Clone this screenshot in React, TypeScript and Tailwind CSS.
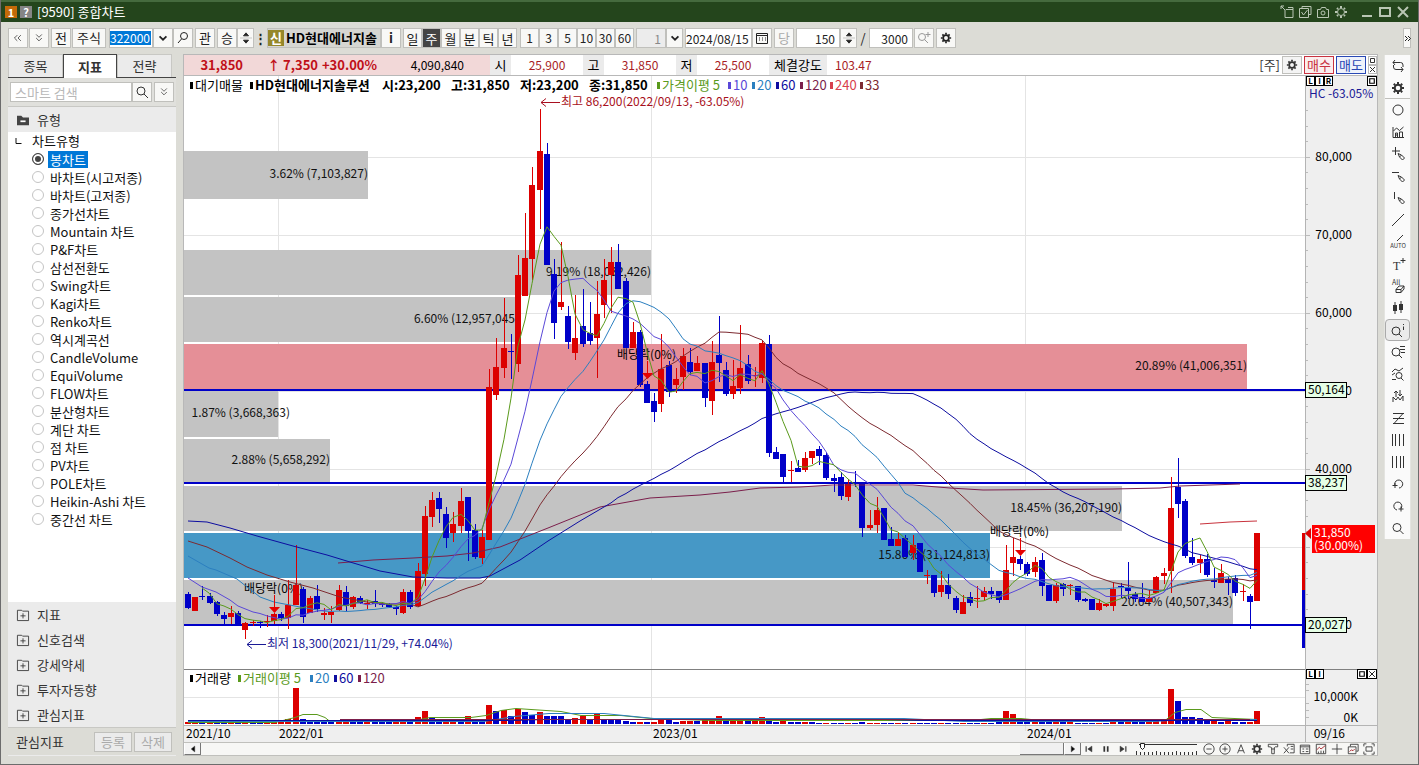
import { Fragment, useState, type ReactNode } from "react";

// up/down, high, body top, body bottom, low (chart units)
type Candle = ["R" | "B", number, number, number, number];

const CANDLES: Candle[] = [
  ["B", 592, 594, 608, 609], ["R", 597, 597, 611, 611], ["B", 586, 596, 597, 600], ["B", 593, 596, 603, 604],
  ["B", 601, 602, 614, 616], ["B", 612, 615, 619, 624], ["R", 606, 613, 617, 624], ["B", 611, 613, 624, 624],
  ["R", 622, 623, 630, 639], ["R", 620, 622, 623, 626], ["B", 621, 622, 623, 628], ["R", 615, 621, 622, 627],
  ["R", 613, 614, 621, 624], ["B", 612, 614, 618, 621], ["R", 580, 605, 618, 629], ["R", 545, 585, 605, 605],
  ["B", 587, 589, 617, 623], ["R", 596, 598, 613, 613], ["B", 585, 596, 609, 612], ["R", 608, 613, 615, 620],
  ["R", 606, 612, 615, 623], ["R", 585, 590, 610, 611], ["B", 586, 592, 606, 611], ["R", 596, 597, 607, 609],
  ["B", 596, 598, 603, 604], ["R", 600, 603, 604, 609], ["B", 590, 601, 604, 607], ["B", 602, 604, 605, 607],
  ["B", 603, 604, 607, 608], ["B", 606, 607, 609, 615], ["R", 589, 592, 613, 614], ["B", 590, 592, 607, 609],
  ["R", 563, 571, 606, 607], ["R", 506, 516, 574, 586], ["R", 492, 500, 517, 527], ["B", 492, 498, 509, 523],
  ["B", 507, 514, 538, 548], ["R", 512, 524, 533, 542], ["R", 488, 501, 526, 533], ["B", 497, 497, 531, 561],
  ["B", 524, 530, 557, 559], ["R", 530, 537, 558, 564], ["R", 369, 387, 540, 540], ["R", 338, 367, 395, 400],
  ["R", 298, 348, 368, 378], ["B", 334, 351, 352, 379], ["R", 255, 275, 364, 372], ["R", 213, 258, 296, 296],
  ["R", 167, 185, 259, 280], ["R", 109, 151, 190, 229], ["B", 143, 154, 265, 265], ["B", 259, 274, 323, 339],
  ["R", 242, 302, 307, 310], ["B", 306, 316, 342, 349], ["R", 295, 338, 353, 360], ["B", 289, 326, 344, 347],
  ["B", 302, 333, 341, 345], ["R", 281, 314, 338, 378], ["R", 259, 280, 305, 318], ["R", 247, 262, 275, 313],
  ["B", 244, 262, 289, 289], ["B", 278, 281, 348, 348], ["R", 322, 332, 348, 348], ["B", 330, 332, 385, 387],
  ["B", 381, 384, 403, 403], ["B", 393, 401, 412, 422], ["R", 334, 369, 404, 412], ["B", 361, 365, 392, 397],
  ["R", 368, 379, 385, 393], ["R", 348, 356, 377, 390], ["B", 348, 362, 372, 375], ["R", 356, 363, 371, 371],
  ["B", 363, 363, 398, 407], ["R", 341, 362, 401, 415], ["B", 316, 355, 363, 382], ["B", 362, 370, 394, 396],
  ["R", 360, 386, 394, 399], ["R", 325, 368, 388, 394], ["B", 355, 364, 381, 384], ["R", 367, 375, 376, 387],
  ["R", 341, 343, 378, 383], ["B", 335, 344, 453, 457], ["B", 447, 452, 459, 459], ["B", 454, 454, 477, 482],
  ["R", 461, 470, 471, 482], ["B", 460, 468, 472, 472], ["R", 452, 458, 470, 472], ["R", 451, 451, 458, 464],
  ["B", 446, 449, 456, 465], ["B", 453, 455, 478, 480], ["B", 474, 478, 481, 492], ["B", 472, 477, 496, 500],
  ["R", 479, 484, 497, 501], ["B", 471, 483, 484, 487], ["B", 484, 484, 528, 537], ["R", 510, 525, 528, 530],
  ["R", 497, 510, 525, 533], ["B", 508, 508, 540, 540], ["B", 527, 539, 546, 546], ["R", 533, 539, 546, 546],
  ["B", 535, 538, 557, 557], ["R", 535, 545, 553, 560], ["B", 543, 543, 572, 572], ["R", 570, 575, 576, 584],
  ["B", 575, 575, 593, 597], ["R", 571, 585, 592, 597], ["B", 574, 585, 594, 599], ["B", 596, 598, 610, 613],
  ["R", 595, 602, 614, 614], ["B", 592, 597, 603, 606], ["R", 586, 598, 599, 608], ["R", 587, 591, 597, 600],
  ["B", 587, 591, 594, 599], ["B", 591, 591, 600, 603], ["R", 545, 570, 600, 600], ["R", 538, 557, 563, 576],
  ["B", 556, 559, 564, 570], ["B", 562, 564, 574, 576], ["R", 557, 562, 572, 577], ["B", 553, 560, 586, 596],
  ["B", 585, 585, 601, 601], ["R", 583, 585, 601, 603], ["B", 583, 584, 589, 596], ["R", 584, 585, 586, 595],
  ["B", 586, 586, 600, 602], ["B", 598, 599, 601, 602], ["B", 599, 599, 610, 610], ["R", 599, 603, 610, 611],
  ["R", 603, 604, 606, 607], ["R", 582, 589, 606, 611], ["B", 583, 586, 587, 598], ["B", 562, 588, 591, 599],
  ["B", 592, 594, 599, 602], ["B", 583, 597, 602, 602], ["R", 590, 598, 602, 602], ["R", 576, 577, 593, 593],
  ["R", 568, 573, 576, 584], ["R", 477, 508, 571, 593], ["B", 458, 487, 504, 518], ["B", 499, 501, 556, 558],
  ["B", 538, 557, 563, 565], ["R", 555, 559, 563, 573], ["B", 554, 559, 575, 577], ["B", 568, 580, 582, 588],
  ["R", 564, 573, 583, 583], ["B", 577, 579, 583, 595], ["B", 575, 578, 593, 596], ["R", 584, 591, 592, 601],
  ["B", 594, 596, 602, 629], ["R", 533, 533, 601, 601],
];

// bar heights, below zero for a blue bar
const VOLUMES = [
  2, 2, -2, 2, -2, -2, 2, -2, 2, -2, -2, 2, 2, 3, 5, 36, -5, -4, -3, -3, -3, 3, 3, -3, -3, 2, -2, -2, -2, 2, 2, -2,
  7, 13, -6, -4, 5, 5, -5, 8, -4, -4, 19, -13, 14, -8, 15, -12, -9, 12, -8, -8, -8, -5, 6, 8, -5, 10, -4, -4, -4, -3,
  -2, 2, -2, 2, 4, -4, -2, 3, 3, -3, 4, 4, 8, -3, 4, 4, -3, 3, 7, -4, -2, 3, -2, -2, 2, -2, -1, 1, -1, -1, 1, -1,
  -2, 1, 1, -1, -1, 1, -1, 1, -1, -1, -1, 1, -1, -1, 1, -1, -1, 1, -1, -2, 13, 10, -3, -2, 2, -2, -2, 2, -2, 2, -1, -1,
  -1, 1, -1, 4, -2, 5, -2, -2, 2, 3, 3, 35, -23, -7, -7, -6, -5, 3, -2, 3, -2, -2, 2, 13,
];

const cx = (i: number) => Math.round(188 + i * 7.174);

const close = ([dir, , top, bottom]: Candle) => (dir === "R" ? top : bottom);

function average(span: number) {
  const pts: string[] = [];
  for (let i = span - 1; i < CANDLES.length; i++) {
    const part = CANDLES.slice(i - span + 1, i + 1);
    const sum = part.reduce((acc, c) => acc + close(c), 0);
    pts.push(`${cx(i)},${(sum / span).toFixed(1)}`);
  }
  return pts.join(" ");
}

const LINES = [
  { color: "#7b1e4b", points: "338,563 373,560 413,558 447,556 473,553 500,547 548,528 600,507 650,498 700,495 730,492 760,488 800,487 833,485 913,485 950,488 983,490 1113,489 1160,488 1180,486 1240,484" },
  { color: "#0d0da0", points: "188,521 207,522 230,528 257,536 293,546 327,555 350,562 380,571 413,577 447,578 480,578 490,576 520,560 548,541 580,521 " + average(60) },
  { color: "#7d2a30", points: "188,541 207,547 230,558 247,567 267,575 290,582 313,588 340,597 367,602 387,604 410,604 " + average(33) },
  { color: "#2b7fc0", points: "188,556 209,568 216,570 237,579 247,587 260,597 274,602 300,607 " + average(20) },
  { color: "#5a48d8", points: "188,578 202,587 216,592 230,600 238,606 " + average(10) },
  { color: "#5a9a1c", points: "202,588 209,593 " + average(5) },
  { color: "#c8323c", points: "1200,524 1230,522 1257,521" },
];

const PROFILE = [
  { y: 151, h: 48, x: 368, fill: "#c3c3c3", label: "3.62% (7,103,827)" },
  { y: 250, h: 45, x: 651, fill: "#c3c3c3", label: "9.19% (18,032,426)" },
  { y: 297, h: 45, x: 515, fill: "#c3c3c3", label: "6.60% (12,957,045" },
  { y: 344, h: 45, x: 1247, fill: "#e58f97", label: "20.89% (41,006,351)" },
  { y: 391, h: 46, x: 278, fill: "#c3c3c3", label: "1.87% (3,668,363)", end: 290 },
  { y: 439, h: 43, x: 330, fill: "#c3c3c3", label: "2.88% (5,658,292)" },
  { y: 486, h: 45, x: 1122, fill: "#c3c3c3", label: "18.45% (36,207,190)" },
  { y: 533, h: 45, x: 990, fill: "#4698c6", label: "15.86% (31,124,813)" },
  { y: 580, h: 45, x: 1233, fill: "#c3c3c3", label: "20.64% (40,507,343)" },
];

const DIVIDENDS = [
  { x: 274, text: 244, y: 593 },
  { x: 647, text: 617, y: 359 },
  { x: 1020, text: 990, y: 536 },
];

const TICKS = Array.from({ length: 33 }, (_, i) => 110 + i * 15.6);

function PriceChart() {
  return (
    <svg viewBox="184 76 1193 593" className="block w-full h-auto text-[12px]" role="img" aria-label="HD현대에너지솔루션 주봉">
      <rect x="184" y="76" width="1193" height="593" fill="#fff" />
      <g shapeRendering="crispEdges">
        {[157, 235, 313, 391, 469, 547, 625].map((y) => (
          <rect key={y} x="184" y={y} width="1121" height="1" fill="#e4e4e4" />
        ))}
        {[278, 651, 1025].map((x) => (
          <rect key={x} x={x} y="76" width="1" height="593" fill="#e4e4e4" />
        ))}
        {PROFILE.map((p) => (
          <rect key={p.y} x="184" y={p.y} width={p.x - 184} height={p.h} fill={p.fill} />
        ))}
        {[389, 482, 624].map((y) => (
          <rect key={y} x="184" y={y} width="1122" height="2" fill="#0000c8" />
        ))}
        <rect x="1302" y="533" width="3" height="57" fill="#dc0000" />
        <rect x="1302" y="590" width="3" height="58" fill="#0000c8" />
        <rect x="1305" y="76" width="72" height="593" fill="#efefef" />
        <rect x="1305" y="76" width="1" height="593" fill="#b4b4b4" />
        {TICKS.map((y) => (
          <rect key={y} x="1306" y={Math.round(y)} width={(Math.round(y) - 157) % 78 ? 2 : 4} height="1" fill="#bbb" />
        ))}
      </g>
      {PROFILE.map((p) => (
        <text key={p.y} x={p.end ?? p.x} y={Math.round(p.y + p.h / 2 + 3)} textAnchor="end" fill="#111">
          {p.label}
        </text>
      ))}
      {DIVIDENDS.map((d) => (
        <text key={d.x} x={d.text} y={d.y}>
          배당락(0%)
        </text>
      ))}
      <g shapeRendering="crispEdges">
        {CANDLES.map(([dir, high, top, bottom, low], i) => (
          <g key={i} fill={dir === "R" ? "#dc0000" : "#0000c8"}>
            <rect x={cx(i)} y={high} width="1" height={Math.max(1, low - high)} />
            <rect x={cx(i) - 3} y={top} width="6" height={bottom - top} />
          </g>
        ))}
      </g>
      {LINES.map((l) => (
        <polyline key={l.color} points={l.points} fill="none" stroke={l.color} strokeWidth="1" />
      ))}
      {DIVIDENDS.map((d) => (
        <g key={d.x} fill="#e60000">
          <rect x={d.x} y={d.y + 2} width="1" height="13" />
          <path d={`M${d.x - 5} ${d.y + 14}h11l-5.500 6z`} />
        </g>
      ))}
      <path d="M546 98.500l-5 4l5 4M541 102.500h19" fill="none" stroke="#a81020" />
      <text x="561" y="106" fill="#a81020">최고 86,200(2022/09/13, -63.05%)</text>
      <path d="M252 640.500l-5 4l5 4M247 644.500h19" fill="none" stroke="#1a1a96" />
      <text x="267" y="648" fill="#1a1a96">최저 18,300(2021/11/29, +74.04%)</text>

      {[
        ["80,000", 161], ["70,000", 239], ["60,000", 317], ["50,000", 395], ["40,000", 473], ["20,000", 629],
      ].map(([label, y]) => (
        <text key={label} x="1352" y={y} textAnchor="end">
          {label}
        </text>
      ))}
      <text x="1309" y="98" fill="#1a1a96">HC -63.05%</text>
      {[
        ["50,164", 383], ["38,237", 476], ["20,027", 618],
      ].map(([label, y]) => (
        <g key={label}>
          <rect x="1305.500" y={Number(y) - 0.5} width="41" height="15" fill="#e6ffe6" stroke="#000" />
          <text x="1308" y={Number(y) + 11}>{label}</text>
        </g>
      ))}
      <rect x="1312" y="525" width="63" height="28" fill="#ff0000" />
      <path d="M1311 528v11l-6-5.500z" fill="#dc0000" />
      <text x="1314" y="537" fill="#fff">31,850</text>
      <text x="1314" y="550" fill="#fff">(30.00%)</text>
    </svg>
  );
}

function VolumeChart() {
  return (
    <svg viewBox="184 669 1193 73" className="block w-full h-auto text-[12px]" role="img" aria-label="거래량">
      <g shapeRendering="crispEdges">
        <rect x="184" y="669" width="1121" height="57" fill="#fff" />
        <rect x="1305" y="669" width="72" height="57" fill="#efefef" />
        <rect x="184" y="725" width="1193" height="17" fill="#efefef" />
        <rect x="184" y="697" width="1121" height="1" fill="#e4e4e4" />
        {[278, 651, 1025].map((x) => (
          <rect key={x} x={x} y="669" width="1" height="62" fill="#e0e0e0" />
        ))}
        <rect x="184" y="669" width="1193" height="1" fill="#808080" />
        <rect x="1305" y="669" width="1" height="73" fill="#b4b4b4" />
        <rect x="184" y="725" width="1193" height="1" fill="#b4b4b4" />
        {VOLUMES.map((v, i) => (
          <rect key={i} x={cx(i) - 3} y={724 - Math.abs(v)} width="6" height={Math.abs(v)} fill={v > 0 ? "#dc0000" : "#0000c8"} />
        ))}
        {[677, 684, 690, 703, 710, 717].map((y) => (
          <rect key={y} x="1306" y={y} width="3" height="1" fill="#bbb" />
        ))}
      </g>
      <g fill="none">
        <path d="M188 722.500h87l20-5l8-3h14l8 3l5 4h80l20-4h41l15-2l15-5l15-2l45 3l20 4h40l30 3l60 2h260l20-2h30l20 2h124l10-8l11-3h15l11 8l45 2" stroke="#5a9a1c" />
        <path d="M188 721.500h296l30-5l35-3h55l30 3l20 2h250l60 3h190l30-2h73" stroke="#2b7fc0" />
        <path d="M188 720.500h326l30-1h340l40 1h333" stroke="#0d0da0" />
        <path d="M340 719.500h910" stroke="#7b1e4b" />
      </g>
      <text x="186" y="738">2021/10</text>
      <text x="279" y="738">2022/01</text>
      <text x="653" y="738">2023/01</text>
      <text x="1027" y="738">2024/01</text>
      <text x="1345" y="738" textAnchor="end">09/16</text>
      <text x="1358" y="701" textAnchor="end">10,000K</text>
      <text x="1358" y="722" textAnchor="end">0K</text>
    </svg>
  );
}

function Icon({ children, size = 14 }: { children: ReactNode; size?: number }) {
  return (
    <svg width={size} height={size} viewBox="0 0 14 14" fill="none" stroke="currentColor" strokeWidth="1" className="overflow-visible" aria-hidden="true">
      {children}
    </svg>
  );
}

const gear = (
  <>
    <circle cx="7" cy="7" r="3.300" strokeWidth="2" />
    <path d="M7 1v2M7 11v2M1 7h2M11 7h2M2.800 2.800l1.400 1.400M9.800 9.800l1.400 1.400M2.800 11.200l1.400-1.400M9.800 4.200l1.400-1.400" strokeWidth="2" />
  </>
);
const pencil = <path d="M7 6.500l1.500 3.500l3 3l2-2l-3-3zM8.500 10l2-2" />;
const lens = (
  <>
    <circle cx="6" cy="6.500" r="4" />
    <path d="M9 9.500l3.500 3.500" />
  </>
);

const TOOLS: { name: string; icon: ReactNode; on?: boolean }[] = [
  { name: "새로고침", icon: <path d="M4 1L2 3.500L4 6M2 3.500h7.500a2.500 2.500 0 0 1 2.500 2.500v2M10 8l2 2.500L10 13M12 10.500H5A2.500 2.500 0 0 1 2.500 8V6" /> },
  { name: "설정", icon: gear },
  { name: "원", icon: <circle cx="7" cy="7" r="5" /> },
  { name: "차트", icon: <path d="M2 2v10.500h11M2.500 6l3-3l3 2.500l4-3.500M4.500 12V8h2v4M8.500 12V7h3v5M4.500 10h2" /> },
  { name: "십자선", icon: <><path d="M4.500 0v8M1 4h8" />{pencil}</> },
  { name: "수평선", icon: <><path d="M1 3.500h7" />{pencil}</> },
  { name: "수직선", icon: <><path d="M3.500 1v7" />{pencil}</> },
  { name: "추세선", icon: <path d="M1 13L13 1" /> },
  { name: "자동 추세선", icon: <><path d="M6 6l6-6" /><text x="7" y="13" fontSize="6" textAnchor="middle" fill="currentColor" stroke="none">AUTO</text></> },
  { name: "텍스트", icon: <><text x="2" y="13" fontSize="12" fontFamily="Liberation Serif, serif" fill="currentColor" stroke="none">T</text><path d="M12 1v5M9.500 3.500h5" /></> },
  { name: "전체 지우기", icon: <><text x="1" y="6" fontSize="7" fill="currentColor" stroke="none">All</text><path d="M5 10.500l3-3.500h5l-3 3.500zM5 10.500v3h5v-3M10 13.500l3-3.500v-3" /></> },
  { name: "캔들", icon: <><path d="M4 1v12M10 0v12" /><path d="M2 4h4v6H2zM8 3h4v6H8z" fill="currentColor" stroke="none" /></> },
  { name: "정보 조회", icon: <><circle cx="5" cy="8" r="4" /><path d="M8 11l3 3M12.500 3.500V7M12.500 1v1" /></>, on: true },
  { name: "목록 조회", icon: <><circle cx="5" cy="7" r="4" /><path d="M8 10l3 3M9 1.500h5M9 4.500h5M10 7.500h4" /></> },
  { name: "지표 조회", icon: <><path d="M1 5l3-3l4 2l4-3M1 8l3-2M1 12.500h4" /><circle cx="8" cy="8.500" r="3" /><path d="M10 11l2.500 2.500" /></> },
  { name: "신호", icon: <path d="M2 13V8l3 3l2-3l2 3l3-4v5M5 8V2M3 4l2-2l2 2M9 1v6M7.500 5L9 7l2-2" /> },
  { name: "되돌림", icon: <path d="M2 2.500h11M2 7.500h11M2 12.500h11M12 2.500l-9 10" /> },
  { name: "시간대 1", icon: <path d="M1.500 1v12M4.500 1v12M8.500 1v12M12.500 1v12" /> },
  { name: "시간대 2", icon: <path d="M1.500 1v12M5.500 1v12M9.500 1v12M12.500 1v12" /> },
  { name: "실행 취소", icon: <path d="M4 8.500A4 4 0 1 1 8 11M1.500 8.500h5M4 6v5" /> },
  { name: "다시 실행", icon: <path d="M10 9.500A4 4 0 1 0 6 11M7.500 10h5M10 7.500v5" /> },
  { name: "확대", icon: lens },
];

const CHART_TYPES = [
  "봉차트", "바차트(시고저종)", "바차트(고저종)", "종가선차트", "Mountain 차트", "P&F차트", "삼선전환도", "Swing차트",
  "Kagi차트", "Renko차트", "역시계곡선", "CandleVolume", "EquiVolume", "FLOW차트", "분산형차트", "계단 차트", "점 차트",
  "PV차트", "POLE차트", "Heikin-Ashi 차트", "중간선 차트",
];

function Btn({ children, className = "w-5", label }: { children: ReactNode; className?: string; label?: string }) {
  return (
    <button aria-label={label} className={`h-5 shrink-0 flex items-center justify-center bg-[#f8f8f6] border border-[#c0c0bc] whitespace-nowrap ${className}`}>
      {children}
    </button>
  );
}

function Spinner() {
  return (
    <Btn label="증감" className="w-[17px]">
      <Icon size={12}>
        <path d="M7 1l3 3.500H4zM7 13l3-3.500H4z" fill="currentColor" />
        <path d="M0 7h14" stroke="#c0c0bc" />
      </Icon>
    </Btn>
  );
}

const chevron = (
  <Icon size={12}>
    <path d="M3 5l4 4l4-4" strokeWidth="2" />
  </Icon>
);

function TitleBar() {
  return (
    <header className="h-[22px] shrink-0 flex items-center bg-[#24451c] border-t-2 border-[#456a3e] px-1 text-white text-[13px]">
      <span className="size-3 bg-[#c46a08] text-[11px] leading-3 font-bold text-center">1</span>
      <span className="size-3 ml-[3px] bg-[#858585] text-[11px] leading-3 font-bold text-center">?</span>
      <h1 className="ml-[5px] leading-5">[9590] 종합차트</h1>
      <div className="ml-auto mr-1 flex gap-1 text-[#b9c6b4]">
        <button aria-label="창 분리"><Icon><path d="M1 1l4 4M1 4V1h3M5 4.500V12.500H13V4.500H6M8 2.500h5v2" /></Icon></button>
        <button aria-label="창 선택"><Icon><path d="M4 3V1.500h9v8h-2M1.500 3.500h9v9h-9zM3.500 7l2 3l4-5" /></Icon></button>
        <button aria-label="화면 캡처"><Icon><path d="M1.500 4.500h3l1-2h4l1 2h2v8h-11z" /><circle cx="7" cy="8" r="2" /></Icon></button>
        <button aria-label="화면 설정"><Icon><circle cx="7" cy="7" r="3.500" /><path d="M7 1v2M7 11v2M1 7h2M11 7h2M3 3l1 1M10 10l1 1M3 11l1-1M10 4l1-1" strokeWidth="2" /></Icon></button>
        <button aria-label="최소화" className="ml-2"><Icon><path d="M2 11h10" strokeWidth="2" /></Icon></button>
        <button aria-label="최대화"><Icon><path d="M2 3h10v8H2z" strokeWidth="2" /></Icon></button>
        <button aria-label="닫기"><Icon><path d="M2 2l10 10M12 2L2 12" strokeWidth="2" /></Icon></button>
      </div>
    </header>
  );
}

function Toolbar() {
  const [period, setPeriod] = useState("주");
  return (
    <div className="h-8 shrink-0 flex items-center text-[13px] text-[#222]">
      <Btn label="이전"><Icon size={10}><path d="M6 3L2 7l4 4M11 3L7 7l4 4" /></Icon></Btn>
      <Btn label="접기" className="w-5 ml-px"><Icon size={10}><path d="M3 2l4 4l4-4M3 7l4 4l4-4" /></Icon></Btn>
      <Btn className="w-5 ml-[2px]">전</Btn>
      <Btn className="w-[34px] ml-px">주식</Btn>
      <div className="ml-[3px] h-5 w-[44px] bg-white border border-[#c0c0bc] flex items-center">
        <input aria-label="종목코드" defaultValue="322000" className="w-[41px] h-[14px] bg-[#0078d7] text-white text-[12px] leading-[14px] outline-none" />
      </div>
      <Btn label="종목 목록">{chevron}</Btn>
      <Btn label="종목 검색"><Icon><circle cx="8" cy="5" r="3.500" /><path d="M5.500 8L2 12" /></Icon></Btn>
      <Btn className="w-5 ml-[2px]">관</Btn>
      <Btn className="w-5 ml-[2px]">승</Btn>
      <Spinner />
      <span className="w-[13px] text-center font-bold">⋮</span>
      <div className="h-5 w-[114px] overflow-hidden flex items-center bg-[#d6d6d2] border border-[#c0c0bc] text-black font-bold whitespace-nowrap">
        <span className="w-4 h-4 shrink-0 bg-[#95872a] text-white text-center leading-4 mr-[2px]">신</span>
        HD현대에너지솔
      </div>
      <Btn label="종목 정보"><b>i</b></Btn>
      <div className="ml-[2px] flex">
        {["일", "주", "월", "분", "틱", "년"].map((p) => (
          <button
            key={p}
            onClick={() => setPeriod(p)}
            className={`w-[19px] h-5 border border-[#c0c0bc] ${p === period ? "bg-[#444] text-white" : "bg-[#f8f8f6]"}`}
          >
            {p}
          </button>
        ))}
      </div>
      <div className="ml-[3px] flex text-[12px]">
        {[1, 3, 5, 10, 30, 60].map((n) => (
          <button key={n} className="w-[19px] h-5 bg-[#f8f8f6] border border-[#c0c0bc]">{n}</button>
        ))}
      </div>
      <input aria-label="분 간격" defaultValue="1" className="ml-[2px] w-[30px] h-5 px-1 text-right text-[#888] bg-[#ececec] border border-[#c0c0bc] text-[12px]" />
      <Btn label="간격 목록" className="w-[17px]">{chevron}</Btn>
      <input aria-label="기준일" defaultValue="2024/08/15" className="ml-[2px] w-[67px] h-5 bg-white border border-[#c0c0bc] text-[12px]" />
      <Btn label="달력"><Icon><path d="M1.500 2.500h11v10h-11zM1.500 4.500h11" /><path d="M4 7h1M7 7h1M10 7h1M4 9h1M7 9h1M10 9h1" /></Icon></Btn>
      <Btn className="w-5 ml-[2px] text-[#aaa]">당</Btn>
      <input aria-label="표시 봉 수" defaultValue="150" className="ml-[2px] w-[44px] h-5 px-1 text-right bg-white border border-[#c0c0bc] text-[12px]" />
      <Spinner />
      <span className="w-3 text-center">/</span>
      <input aria-label="전체 봉 수" defaultValue="3000" className="w-[44px] h-5 px-1 text-right bg-white border border-[#c0c0bc] text-[12px]" />
      <Btn label="확대 조회" className="w-5 ml-px text-[#999]"><Icon><circle cx="5" cy="6" r="3.500" /><path d="M7.500 8.500L11 12M11 1v5M8.500 3.500h5" /></Icon></Btn>
      <Btn label="차트 설정" className="w-5 ml-[2px]"><Icon size={12}>{gear}</Icon></Btn>
      <Btn label="더보기" className="w-2 ml-auto"><Icon size={7}><path d="M2 2l5 5l-5 5M8 2l5 5l-5 5" strokeWidth="2" /></Icon></Btn>
    </div>
  );
}

function Sidebar() {
  const [type, setType] = useState(CHART_TYPES[0]);
  return (
    <aside className="w-[168px] shrink-0 flex flex-col bg-[#ebebeb] text-[13px] text-[#333]">
      <div className="flex h-6 shrink-0 bg-[#dcdcd6] border-b border-[#444]">
        <button className="w-[55px] border border-b-0 border-[#c8c8c4] bg-[#ebebeb]">종목</button>
        <button className="w-[54px] h-6 border border-b-0 border-[#444] bg-white font-bold leading-5">지표</button>
        <button className="w-[55px] border border-b-0 border-[#c8c8c4] bg-[#ebebeb]">전략</button>
      </div>
      <div className="flex gap-[2px] px-[2px] h-[29px] shrink-0 items-center bg-[#e0e0dc] border-b border-[#c8c8c4]">
        <div className="flex">
          <input aria-label="스마트 검색" placeholder="스마트 검색" className="w-[122px] h-5 pl-1 bg-white border border-[#c0c0bc] placeholder:text-[#b8b8b8]" />
          <Btn label="검색"><Icon><circle cx="6" cy="6" r="4" /><path d="M9 9l4 4" /></Icon></Btn>
        </div>
        <Btn label="검색 옵션"><Icon size={10}><path d="M3 2l4 4l4-4M3 7l4 4l4-4" /></Icon></Btn>
      </div>
      <h2 className="flex items-center gap-2 h-[25px] shrink-0 pl-[9px]">
        <Icon size={12}><path d="M0 2h5l2 2h7v9H0z" fill="#444" stroke="none" /><path d="M4 8.500h6" stroke="#fff" strokeWidth="2" /></Icon>
        유형
      </h2>
      <fieldset className="grow bg-white min-h-[460px] text-[#111]">
        <div className="flex items-center h-[18px] gap-[10px] pl-[7px]">
          <Icon size={7}><path d="M2 0v11h11" strokeWidth="2" /></Icon>
          차트유형
        </div>
        {CHART_TYPES.map((t) => (
          <label key={t} className="flex items-center h-[18px] pl-6 gap-1">
            <input
              type="radio"
              name="chart-type"
              checked={t === type}
              onChange={() => setType(t)}
              className="appearance-none size-3 rounded-full border border-[#c4c4c4] bg-white checked:border-[#444] checked:bg-[#444] checked:ring-2 checked:ring-inset checked:ring-white"
            />
            <span className={t === type ? "bg-[#0078d7] text-white px-[2px] leading-[17px]" : "px-[2px] leading-[17px]"}>{t}</span>
          </label>
        ))}
      </fieldset>
      {["지표", "신호검색", "강세약세", "투자자동향", "관심지표"].map((g) => (
        <button key={g} className="flex items-center gap-2 h-[25px] shrink-0 pl-[9px]">
          <Icon size={12}><path d="M0.500 1.500h5l1 1h7v11h-13zM4 8h6M7 5v6" /></Icon>
          {g}
        </button>
      ))}
      <div className="flex items-center h-7 shrink-0 pl-2 pr-1 mb-px bg-[#dcdcd6] border-t border-[#c8c8c4]">
        관심지표
        <button className="ml-auto w-[38px] h-5 leading-[18px] bg-[#ebebeb] border border-[#c0c0bc] text-[#aaa]">등록</button>
        <button className="ml-[2px] w-[38px] h-5 leading-[18px] bg-[#ebebeb] border border-[#c0c0bc] text-[#aaa]">삭제</button>
      </div>
    </aside>
  );
}

const QUOTES = [
  { label: "시", value: "25,900" },
  { label: "고", value: "31,850" },
  { label: "저", value: "25,500" },
];

function QuoteBar() {
  return (
    <div className="flex h-[22px] border-y border-[#b8b8b8] bg-white text-[13px] leading-5 text-[#a81c24]">
      <div className="flex w-[306px] bg-[#f2d8d8] font-bold text-[#c01018]">
        <span className="w-[59px] text-right">31,850</span>
        <span className="w-[75px] text-right">↑ 7,350</span>
        <span className="w-[59px] text-right">+30.00%</span>
        <span className="w-[87px] text-right font-normal text-black text-[12px]">4,090,840</span>
      </div>
      {QUOTES.map((q) => (
        <Fragment key={q.label}>
          <span className="w-[21px] bg-[#ebebeb] text-black text-center">{q.label}</span>
          <span className="w-[72px] text-center text-[12px]">{q.value}</span>
        </Fragment>
      ))}
      <span className="w-[58px] bg-[#ebebeb] text-black text-center">체결강도</span>
      <span className="ml-2 text-[12px]">103.47</span>
      <span className="ml-auto text-[#333]">[주]</span>
      <div className="flex items-center gap-[2px] ml-[2px]">
        <button aria-label="차트 옵션" className="w-5 h-[18px] flex items-center justify-center bg-[#f4f4f4] border border-[#c0c0bc] text-[#333]"><Icon size={12}>{gear}</Icon></button>
        <button className="w-[30px] h-[18px] leading-4 bg-[#fbeeee] border border-[#c83240] text-[#c83240]">매수</button>
        <button className="w-[30px] h-[18px] leading-4 bg-[#eef2fb] border border-[#2848b4] text-[#2848b4]">매도</button>
        <div className="flex flex-col text-[#333]">
          <button aria-label="확대" className="border border-[#bbb]"><Icon size={7}><path d="M3 3h8v8H3z" strokeWidth="2" /></Icon></button>
          <button aria-label="닫기" className="border border-[#bbb]"><Icon size={7}><path d="M2 2l10 10M12 2L2 12" strokeWidth="2" /></Icon></button>
        </div>
      </div>
    </div>
  );
}

function Legend({ items }: { items: { text: string; className: string }[] }) {
  return (
    <ul className="absolute left-[6px] top-0 flex text-[13px] leading-[18px] whitespace-nowrap">
      {items.map((it) => (
        <li key={it.text} className={`flex items-center gap-[2px] ${it.className}`}>
          <i className="w-[3px] h-[7px] bg-current" />
          {it.text}
        </li>
      ))}
    </ul>
  );
}

function Corner({ letters, close: closable }: { letters: string[]; close?: boolean }) {
  return (
    <div className="absolute right-0 top-0 w-[71px] flex justify-between text-[8px] leading-2 font-bold">
      <div className="flex">
        {letters.map((l) => (
          <button key={l} className="w-[9px] h-[10px] bg-white border border-black">{l}</button>
        ))}
      </div>
      <div className="flex">
        <button aria-label="창 확대" className="size-[10px] bg-white border border-black"><Icon size={8}><path d="M3 3h8v8H3z" strokeWidth="2" /></Icon></button>
        {closable && <button aria-label="창 닫기" className="size-[10px] bg-white border border-black"><Icon size={8}><path d="M2 2l10 10M12 2L2 12" strokeWidth="1.500" /></Icon></button>}
      </div>
    </div>
  );
}

const BOTTOM_TOOLS: { name: string; icon: ReactNode }[] = [
  { name: "축소", icon: <><circle cx="7" cy="7" r="6" /><path d="M4 7h6" /></> },
  { name: "확대", icon: <><circle cx="7" cy="7" r="6" /><path d="M4 7h6M7 4v6" /></> },
  { name: "글자", icon: <path d="M3 12L7 2l4 10M4.500 9h5" /> },
  { name: "설정", icon: gear },
  { name: "도구", icon: <path d="M1.500 1.500h11v3h-3l-1 1v7h-3v-7l-2-1h-2zM5 7h4" /> },
  { name: "엑셀", icon: <path d="M5 4V1.500h8v10H8M1 5l6 7M7 5l-6 7M9 4h3M9 7h3" /> },
  { name: "표", icon: <path d="M1.500 2.500h11v10h-11zM1.500 4.500h11M4 7h2M8 7h3M4 10h2M8 10h3" /> },
  { name: "차트", icon: <><path d="M1.500 1.500h11v11h-11zM4 10v2M7 9v3M10 9v3" /><path d="M2 8l3-3l2 2l5-4" stroke="#a81c24" /></> },
  { name: "십자선", icon: <path d="M7 1v12M1 7h12" /> },
  { name: "복제", icon: <><path d="M4 4V1.500h9v8h-2M1.500 4.500h9v8h-9z" /><path d="M3 10l2-2l2 1l2-2" stroke="#a81c24" /></> },
  { name: "전체화면", icon: <path d="M1 4V1h3M10 1h3v3M13 10v3h-3M4 13H1v-3M3.500 4.500h7v5h-7z" /> },
];

function ScrollRow() {
  return (
    <div className="flex h-[14px] border-y border-[#c0c0bc] bg-[#f7f7f5] text-[#333]">
      <button aria-label="왼쪽" className="w-[17px] flex items-center justify-center bg-[#f4f4f4] border border-t-0 border-white border-r-[#777] border-b-[#777]"><Icon size={8}><path d="M10 2v10L4 7z" fill="#000" /></Icon></button>
      <div className="grow flex justify-end"><div className="w-[44px] bg-[#f0f0f0] border-r border-b border-[#777]" /></div>
      <button aria-label="오른쪽" className="w-[17px] flex items-center justify-center bg-[#f4f4f4] border border-t-0 border-white border-r-[#777] border-b-[#777]"><Icon size={8}><path d="M4 2v10l6-5z" fill="#000" /></Icon></button>
      <div className="flex items-center w-[54px] justify-between pl-1 pr-2">
        <button aria-label="처음"><Icon size={8}><path d="M2 2v10" strokeWidth="2" /><path d="M12 2v10L5 7z" fill="currentColor" /></Icon></button>
        <button aria-label="일시정지"><Icon size={8}><path d="M4 2v10M10 2v10" strokeWidth="3" /></Icon></button>
        <button aria-label="끝"><Icon size={8}><path d="M2 2v10l7-5z" fill="currentColor" /><path d="M12 2v10" strokeWidth="2" /></Icon></button>
      </div>
      <svg width="66" height="12" viewBox="0 0 66 12" className="shrink-0" aria-hidden="true">
        <path d="M4 1.500h58" stroke="#333" />
        {Array.from({ length: 16 }, (_, i) => (
          <rect key={i} x={1 + i * 4} y={i % 5 ? 9 : 8} width="1" height="4" fill="#333" />
        ))}
        <path d="M5.500 0.500h4v4l-2 2l-2-2z" fill="#fff" stroke="#222" />
      </svg>
      <div className="flex w-[176px] shrink-0">
        {BOTTOM_TOOLS.map((t) => (
          <button key={t.name} aria-label={t.name} className="w-4 flex items-center justify-center"><Icon size={12}>{t.icon}</Icon></button>
        ))}
      </div>
    </div>
  );
}

export default function App() {
  return (
    <div className="min-h-screen flex flex-col bg-[#dcdcd6] border-x border-b border-[#6c6c6c] font-['Noto_Sans_CJK_KR','Noto_Sans',sans-serif] text-black">
      <TitleBar />
      <div className="grow flex flex-col px-[7px] pb-2">
        <Toolbar />
        <div className="grow flex items-start">
          <div className="self-stretch flex mr-[7px]"><Sidebar /></div>
          <main className="grow min-w-0 border-x border-[#b8b8b8]">
            <QuoteBar />
            <section className="relative">
              <PriceChart />
              <Legend
                items={[
                  { text: "대기매물", className: "w-[60px]" },
                  { text: "HD현대에너지솔루션", className: "w-[132px] font-bold" },
                ]}
              />
              <div className="absolute left-[198px] top-0 flex text-[13px] leading-[18px] font-bold whitespace-nowrap">
                {["시:23,200", "고:31,850", "저:23,200", "종:31,850"].map((t) => (
                  <span key={t} className="w-[69px]">{t}</span>
                ))}
              </div>
              <div className="absolute left-[467px] top-0">
                <Legend
                  items={[
                    { text: "가격이평 5", className: "w-[71px] text-[#5a9a1c]" },
                    { text: "10", className: "w-6 text-[#5a48d8]" },
                    { text: "20", className: "w-6 text-[#2b7fc0]" },
                    { text: "60", className: "w-6 text-[#0d0da0]" },
                    { text: "120", className: "w-[30px] text-[#7b1e4b]" },
                    { text: "240", className: "w-[30px] text-[#d8404c]" },
                    { text: "33", className: "text-[#7d2a30]" },
                  ]}
                />
              </div>
              <Corner letters={["L", "I", "R"]} />
            </section>
            <section className="relative">
              <VolumeChart />
              <Legend
                items={[
                  { text: "거래량", className: "w-12" },
                  { text: "거래이평 5", className: "w-[72px] text-[#5a9a1c]" },
                  { text: "20", className: "w-6 text-[#2b7fc0]" },
                  { text: "60", className: "w-6 text-[#0d0da0]" },
                  { text: "120", className: "text-[#7b1e4b]" },
                ]}
              />
              <Corner letters={["L", "I"]} close />
            </section>
            <ScrollRow />
          </main>
          <nav aria-label="그리기 도구" className="w-[27px] shrink-0 ml-[6px] mt-px bg-[#fafafa] border-x border-[#e4e4e0] text-[#333]">
            {TOOLS.map((t, i) => (
              <button
                key={t.name}
                aria-label={t.name}
                className={`w-full h-[22px] flex items-center justify-center ${i === 1 ? "border-b border-[#c0c0bc]" : ""} ${t.on ? "bg-[#ebebeb] border border-[#aaa] rounded-sm" : ""}`}
              >
                <Icon>{t.icon}</Icon>
              </button>
            ))}
          </nav>
        </div>
      </div>
    </div>
  );
}
